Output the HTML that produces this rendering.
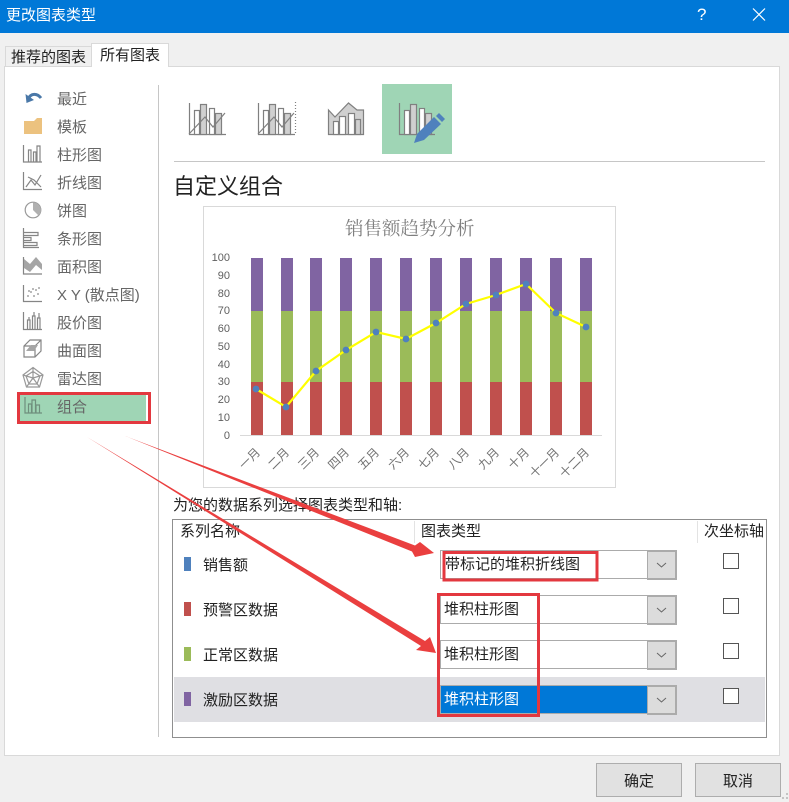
<!DOCTYPE html>
<html lang="zh">
<head>
<meta charset="utf-8">
<title>更改图表类型</title>
<style>
html,body{margin:0;padding:0;width:789px;height:802px;overflow:hidden;background:#f0f0f0}
svg{display:block}
text{font-family:"Liberation Sans","Noto Sans CJK SC",sans-serif;font-size:15px;fill:#222}
.side{fill:#666;font-size:15px}
.ax{fill:#5f5f5f;font-size:11px;text-anchor:end}
.mon{fill:#707070;font-size:12px;text-anchor:end}
</style>
</head>
<body>
<svg width="789" height="802" viewBox="0 0 789 802" xmlns="http://www.w3.org/2000/svg">
<rect width="789" height="802" fill="#f0f0f0"/>
<!-- title bar -->
<rect width="789" height="33" fill="#0078d7"/>
<text x="6" y="20" style="fill:#fff">更改图表类型</text>
<text x="697" y="20" style="fill:#fff;font-size:17px">?</text>
<path d="M753 8.500L765 20.500M765 8.500L753 20.500" stroke="#fff" stroke-width="1.200" fill="none"/>
<!-- panel -->
<rect x="4.500" y="66.500" width="775" height="689" fill="#fff" stroke="#d9d9d9"/>
<!-- tabs -->
<rect x="5.500" y="46.500" width="86" height="20" fill="#f0f0f0" stroke="#d9d9d9"/>
<text x="11" y="62">推荐的图表</text>
<rect x="91.500" y="43.500" width="77" height="23" fill="#fff" stroke="#d9d9d9"/>
<rect x="92" y="64" width="76" height="4" fill="#fff"/>
<text x="100" y="60">所有图表</text>
<!-- separators -->
<rect x="158" y="85" width="1" height="652" fill="#c6c6c6"/>
<rect x="174" y="161" width="591" height="1" fill="#c6c6c6"/>
<!-- sidebar selected -->
<rect x="20" y="395" width="126" height="26" fill="#9fd5b5"/>
<!-- sidebar text -->
<text class="side" x="57" y="104">最近</text>
<text class="side" x="57" y="132">模板</text>
<text class="side" x="57" y="160">柱形图</text>
<text class="side" x="57" y="188">折线图</text>
<text class="side" x="57" y="216">饼图</text>
<text class="side" x="57" y="244">条形图</text>
<text class="side" x="57" y="272">面积图</text>
<text class="side" x="57" y="300">X Y (散点图)</text>
<text class="side" x="57" y="328">股价图</text>
<text class="side" x="57" y="356">曲面图</text>
<text class="side" x="57" y="384">雷达图</text>
<text class="side" x="57" y="412">组合</text>
<!-- sidebar icons -->
<path d="M28 99C31 93 37 93 41 98" stroke="#4a78a8" stroke-width="3" fill="none"/>
<path d="M25.500 94L26.500 103L34 100Z" fill="#4a78a8"/>
<path d="M24 121H34L37 118H42V134H24Z" fill="#ecc27f"/>
<g fill="none" stroke="#858585" stroke-width="1.200">
<path d="M23.500 145V162H42"/>
<path d="M28.500 162V150H31V162M33.500 162V152H36V162M37 162V146H40V162"/>
<path d="M23.500 172V189.500H42"/>
<path d="M26 187L31 180L35 185L41 175M28 177L34 180L41 187"/>
<circle cx="33" cy="210" r="7.800" stroke="#999"/>
<path d="M33 202.500A7.500 7.500 0 0 1 38.500 215.500L33 210Z" fill="#b0b0b0" stroke="none"/>
<path d="M23.500 228V247.500H39M24 232.500H38V235.500H24M24 237.500H31V240.500H24M24 242.500H37V245.500H24"/>
<path d="M23.500 257V274H42"/>
<path d="M23.500 285V301.500H42"/>
<path d="M23.500 312V329.500H42M27.500 329V320H30V329M32.500 329V316H35V329M37.500 329V318H40V329M29 317V320M34 312V316M39 313V318"/>
<path d="M24 346L30 340H41V351L35 357H24ZM24 346H35V357M35 346L41 340"/>
<path d="M33 367.500L43 375L39.500 387H26.500L23 375ZM33 367.500V378M43 375L33 378M39.500 387L33 378M26.500 387L33 378M23 375L33 378M33 371.500L40 376L37 384H29L26 376Z" stroke="#999"/>
<path d="M25 397V413H42M28.500 412.500V404H31.500V412.500M32 412.500V400H35.500V412.500M36 412.500V405H39.500V412.500" stroke="#6f8f7d"/>
</g>
<g fill="#a5a5a5">
<polygon points="24,259 30,264 36,257 42,264 42,270 36,265 30,272 24,268"/>
<circle cx="28" cy="296" r="1"/><circle cx="31" cy="292" r="1"/><circle cx="34" cy="296" r="1"/><circle cx="36" cy="290" r="1"/><circle cx="39" cy="288" r="1"/><circle cx="38" cy="294" r="1"/><circle cx="33" cy="289" r="1"/><circle cx="29" cy="291" r="1"/>
<path d="M26 351L31 345H38L34 351Z"/>
</g>
<!-- red rect sidebar -->
<rect x="18.500" y="393.500" width="131" height="29" fill="none" stroke="#e3383f" stroke-width="3"/>
<!-- top icons -->
<rect x="382" y="84" width="70" height="70" fill="#9fd5b5"/>
<g stroke="#808080" stroke-width="1.200" fill="#fff">
<path d="M189.500 103V134.500H226" fill="none"/>
<rect x="194.500" y="110.500" width="5" height="24"/><rect x="200.500" y="104.500" width="6" height="30" fill="#d0d0d0"/><rect x="209.500" y="108.500" width="5" height="26"/><rect x="215.500" y="113.500" width="6" height="21" fill="#d0d0d0"/>
<path d="M189 134L205 117L213 127L225 113" fill="none"/>
<path d="M258.500 103V134.500H295" fill="none"/>
<rect x="263.500" y="110.500" width="5" height="24"/><rect x="269.500" y="104.500" width="6" height="30" fill="#d0d0d0"/><rect x="278.500" y="108.500" width="5" height="26"/><rect x="284.500" y="113.500" width="6" height="21" fill="#d0d0d0"/>
<path d="M258 134L274 117L282 127L294 113" fill="none"/>
<path d="M295.500 102V134" fill="none" stroke-dasharray="1 2"/>
<path d="M328.500 110L335 117L348.500 103L357 110H363.500V134.500H328.500Z" fill="#d0d0d0"/>
<rect x="333.500" y="121.500" width="5" height="13"/><rect x="339.500" y="116.500" width="6" height="18"/><rect x="348.500" y="113.500" width="6" height="21"/><rect x="355.500" y="119.500" width="5" height="15" fill="#d0d0d0"/>
<path d="M399.500 103V134.500H435" fill="none"/>
<rect x="404.500" y="110.500" width="5" height="24"/><rect x="410.500" y="104.500" width="6" height="30" fill="#d0d0d0"/><rect x="419.500" y="108.500" width="5" height="26"/><rect x="425.500" y="113.500" width="6" height="21" fill="#d0d0d0"/>
</g>
<path d="M414 143L417 134L434 117L441 124L424 140Z" fill="#4f81bd"/>
<path d="M436 116L439 113L445 119L442 122Z" fill="#4f81bd"/>
<text x="173" y="194" style="font-size:22px">自定义组合</text>
<!-- chart -->
<rect x="203.500" y="206.500" width="412" height="281" fill="#fff" stroke="#d9d9d9"/>
<text x="345" y="235" style="font-family:'Liberation Serif','Noto Serif CJK SC',serif;font-size:18.500px;fill:#7f7f7f">销售额趋势分析</text>
<g>
<text class="ax" x="230" y="261">100</text><text class="ax" x="230" y="279">90</text><text class="ax" x="230" y="297">80</text><text class="ax" x="230" y="314">70</text><text class="ax" x="230" y="332">60</text><text class="ax" x="230" y="350">50</text><text class="ax" x="230" y="368">40</text><text class="ax" x="230" y="385">30</text><text class="ax" x="230" y="403">20</text><text class="ax" x="230" y="421">10</text><text class="ax" x="230" y="439">0</text>
</g>
<defs>
<g id="bar"><rect x="0" y="258" width="12" height="53" fill="#8064a2"/><rect x="0" y="311" width="12" height="71" fill="#9bbb59"/><rect x="0" y="382" width="12" height="53" fill="#c0504d"/></g>
</defs>
<use href="#bar" x="251"/><use href="#bar" x="281"/><use href="#bar" x="310"/><use href="#bar" x="340"/><use href="#bar" x="370"/><use href="#bar" x="400"/><use href="#bar" x="430"/><use href="#bar" x="460"/><use href="#bar" x="490"/><use href="#bar" x="520"/><use href="#bar" x="550"/><use href="#bar" x="580"/>
<rect x="240" y="435" width="362" height="1" fill="#d9d9d9"/>
<polyline points="256,389 286,407 316,371 346,350 376,332 406,339 436,323 466,304 496,295 526,284 556,313 586,327" fill="none" stroke="#ffff00" stroke-width="2.200"/>
<g fill="#4f81bd">
<circle cx="256" cy="389" r="3.400"/><circle cx="286" cy="407" r="3.400"/><circle cx="316" cy="371" r="3.400"/><circle cx="346" cy="350" r="3.400"/><circle cx="376" cy="332" r="3.400"/><circle cx="406" cy="339" r="3.400"/><circle cx="436" cy="323" r="3.400"/><circle cx="466" cy="304" r="3.400"/><circle cx="496" cy="295" r="3.400"/><circle cx="526" cy="284" r="3.400"/><circle cx="556" cy="313" r="3.400"/><circle cx="586" cy="327" r="3.400"/>
</g>
<g>
<text class="mon" transform="translate(261,453) rotate(-45)">一月</text>
<text class="mon" transform="translate(290,453) rotate(-45)">二月</text>
<text class="mon" transform="translate(320,453) rotate(-45)">三月</text>
<text class="mon" transform="translate(350,453) rotate(-45)">四月</text>
<text class="mon" transform="translate(380,453) rotate(-45)">五月</text>
<text class="mon" transform="translate(410,453) rotate(-45)">六月</text>
<text class="mon" transform="translate(440,453) rotate(-45)">七月</text>
<text class="mon" transform="translate(470,453) rotate(-45)">八月</text>
<text class="mon" transform="translate(500,453) rotate(-45)">九月</text>
<text class="mon" transform="translate(530,453) rotate(-45)">十月</text>
<text class="mon" transform="translate(560,453) rotate(-45)">十一月</text>
<text class="mon" transform="translate(590,453) rotate(-45)">十二月</text>
</g>
<!-- table -->
<text x="173" y="510" style="font-size:15px">为您的数据系列选择图表类型和轴:</text>
<rect x="172.500" y="519.500" width="594" height="218" fill="#fff" stroke="#8f8f8f"/>
<rect x="414" y="521" width="1" height="22" fill="#e3e3e3"/>
<rect x="697" y="521" width="1" height="22" fill="#e3e3e3"/>
<text x="180" y="536">系列名称</text>
<text x="421" y="536">图表类型</text>
<text x="704" y="536">次坐标轴</text>
<rect x="174" y="677" width="591" height="45" fill="#dfdfe3"/>
<rect x="184" y="557" width="7" height="14" fill="#4f81bd"/>
<rect x="184" y="602" width="7" height="14" fill="#c0504d"/>
<rect x="184" y="647" width="7" height="14" fill="#9bbb59"/>
<rect x="184" y="692" width="7" height="14" fill="#8064a2"/>
<text x="203" y="570">销售额</text>
<text x="203" y="615">预警区数据</text>
<text x="203" y="660">正常区数据</text>
<text x="203" y="705">激励区数据</text>
<!-- combos -->
<g>
<rect x="440.500" y="550.500" width="236" height="28" fill="#fff" stroke="#ababab"/>
<rect x="440.500" y="595.500" width="236" height="28" fill="#fff" stroke="#ababab"/>
<rect x="440.500" y="640.500" width="236" height="28" fill="#fff" stroke="#ababab"/>
<rect x="440.500" y="685.500" width="236" height="28" fill="#0078d7" stroke="#ababab"/>
<rect x="647" y="550" width="30" height="30" fill="#ababab"/>
<rect x="647" y="595" width="30" height="30" fill="#ababab"/>
<rect x="647" y="640" width="30" height="30" fill="#ababab"/>
<rect x="647" y="685" width="30" height="30" fill="#ababab"/>
<rect x="648" y="552" width="27" height="26" fill="#dcdcdc"/>
<rect x="648" y="597" width="27" height="26" fill="#dcdcdc"/>
<rect x="648" y="642" width="27" height="26" fill="#dcdcdc"/>
<rect x="648" y="687" width="27" height="26" fill="#dcdcdc"/>
<path d="M657 563L661.500 567L666 563M657 608L661.500 612L666 608M657 653L661.500 657L666 653M657 698L661.500 702L666 698" fill="none" stroke="#666" stroke-width="1"/>
</g>
<text x="445" y="569">带标记的堆积折线图</text>
<text x="444" y="614">堆积柱形图</text>
<text x="444" y="659">堆积柱形图</text>
<text x="444" y="704" style="fill:#fff">堆积柱形图</text>
<g fill="#fff" stroke="#555">
<rect x="723.500" y="553.500" width="15" height="15"/>
<rect x="723.500" y="598.500" width="15" height="15"/>
<rect x="723.500" y="643.500" width="15" height="15"/>
<rect x="723.500" y="688.500" width="15" height="15"/>
</g>
<!-- annotations -->
<rect x="444" y="552.500" width="153" height="27.500" fill="none" stroke="#e3383f" stroke-width="3"/>
<rect x="438.500" y="594.500" width="100" height="121" fill="none" stroke="#e3383f" stroke-width="3"/>
<polygon points="125,436 415,545.500 420,542 434,553 415,557 412,551.500" fill="#ea3f3f"/>
<polygon points="87,437 425,641 430,637 436,653 416,650 421,646" fill="#ea3f3f"/>
<!-- buttons -->
<rect x="596.500" y="763.500" width="85" height="33" fill="#e1e1e1" stroke="#adadad"/>
<rect x="695.500" y="763.500" width="85" height="33" fill="#e1e1e1" stroke="#adadad"/>
<text x="624" y="786">确定</text>
<text x="723" y="786">取消</text>
<g fill="#c4c4c4">
<rect x="786" y="793" width="2" height="2"/><rect x="782" y="797" width="2" height="2"/><rect x="786" y="797" width="2" height="2"/>
</g>
</svg>
</body>
</html>
